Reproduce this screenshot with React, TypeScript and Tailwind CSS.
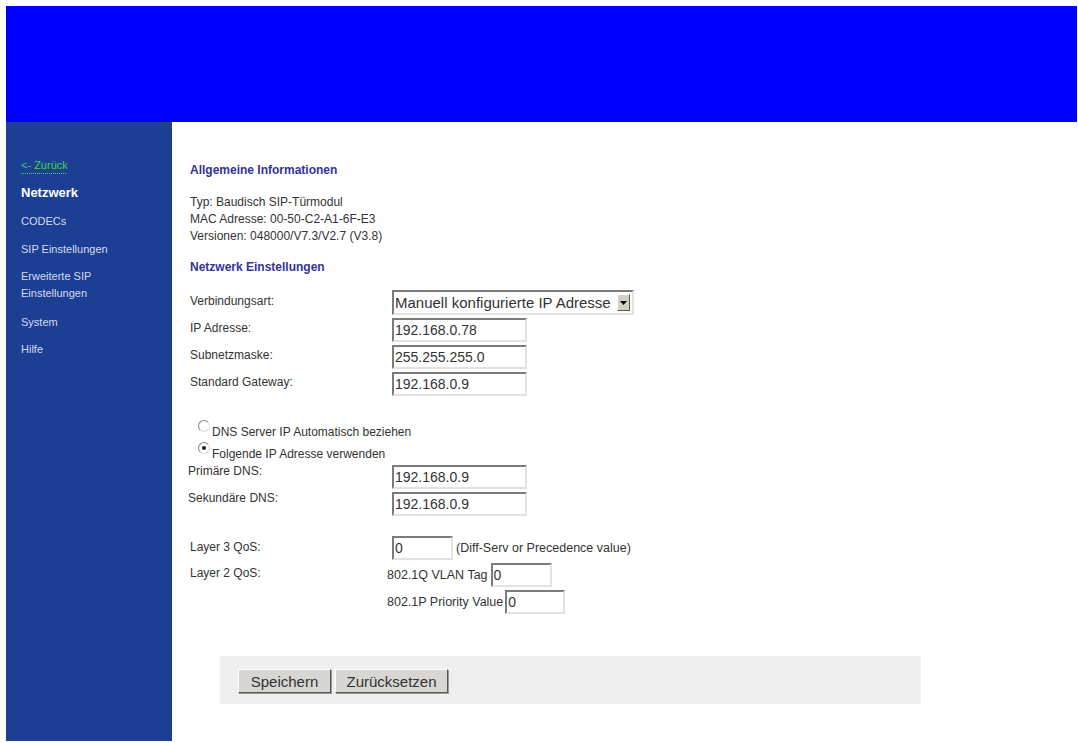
import React from 'react'

const inset =
  'border-2 border-t-[#7b7b7b] border-l-[#7b7b7b] border-r-[#e2e2e2] border-b-[#e2e2e2] bg-white'

function TextBox({ value, className }: { value: string; className: string }) {
  return (
    <input
      readOnly
      value={value}
      className={`${inset} h-[24px] px-[1px] text-[14px] leading-none text-[#333] outline-none ${className}`}
    />
  )
}

function Radio({ checked }: { checked?: boolean }) {
  return (
    <span className="flex h-[12px] w-[12px] shrink-0 items-center justify-center rounded-full border border-t-[#808080] border-l-[#808080] border-r-[#dcdcdc] border-b-[#dcdcdc] bg-white">
      {checked && <span className="h-[4px] w-[4px] rounded-full bg-[#222]" />}
    </span>
  )
}

function Button({ label, className }: { label: string; className: string }) {
  return (
    <button
      type="button"
      className={`h-[24px] border border-t-white border-l-white border-r-[#555] border-b-[#555] bg-[#d8d6d2] text-[15px] leading-none text-[#333] shadow-[1px_1px_0_#9a9a9a] ${className}`}
    >
      {label}
    </button>
  )
}

const nav = [
  { label: 'CODECs' },
  { label: 'SIP Einstellungen' },
]

export default function App() {
  return (
    <div className="min-h-screen bg-white pl-[6px] pr-[1px] pt-[6px] font-['Liberation_Sans',Arial,sans-serif]">
      {/* header band */}
      <div className="h-[116px] bg-[#0000ff]" />

      <div className="flex h-[619px]">
        {/* sidebar */}
        <nav className="w-[166px] shrink-0 bg-[#1c3f94] pl-[15px] pt-[29px] text-[11px] text-[#d3dbf0]">
          <div className="flex h-[28px] items-center">
            <span className="text-[#49cf4a] underline decoration-dotted decoration-[#49cf4a] underline-offset-[4px]">
              &lt;- Zurück
            </span>
          </div>
          <div className="flex h-[28px] items-center text-[13px] font-bold text-white">Netzwerk</div>
          {nav.map(n => (
            <div key={n.label} className="flex h-[28px] items-center">
              {n.label}
            </div>
          ))}
          <div className="h-[45px] pt-[5px] leading-[17px]">
            Erweiterte SIP
            <br />
            Einstellungen
          </div>
          <div className="flex h-[28px] items-center">System</div>
          <div className="flex h-[26px] items-center">Hilfe</div>
        </nav>

        {/* content */}
        <main className="flex-1 pl-[18px] pt-[40px] text-[12px] text-[#333]">
          <h2 className="text-[12px] font-bold leading-[16px] text-[#333399]">Allgemeine Informationen</h2>
          <div className="mt-[16px] leading-[17px]">
            <p>Typ: Baudisch SIP-Türmodul</p>
            <p>MAC Adresse: 00-50-C2-A1-6F-E3</p>
            <p>Versionen: 048000/V7.3/V2.7 (V3.8)</p>
          </div>
          <h2 className="mt-[14px] text-[12px] font-bold leading-[16px] text-[#333399]">Netzwerk Einstellungen</h2>

          <div className="mt-[14px]">
            <div className="flex h-[27px] items-center">
              <span className="w-[202px] pb-[3px]">Verbindungsart:</span>
              <div className={`${inset} flex h-[25px] w-[242px] items-center justify-between pl-[1px] pr-[2px]`}>
                <span className="text-[15px] leading-none text-[#333]">Manuell konfigurierte IP Adresse</span>
                <span className="flex h-[17px] w-[13px] items-center justify-center border border-t-white border-l-white border-r-[#555] border-b-[#555] bg-[#d4d0c8]">
                  <svg width="7" height="4" viewBox="0 0 7 4">
                    <path d="M0 0h7L3.5 4z" fill="#000" />
                  </svg>
                </span>
              </div>
            </div>
            {[
              ['IP Adresse:', '192.168.0.78'],
              ['Subnetzmaske:', '255.255.255.0'],
              ['Standard Gateway:', '192.168.0.9'],
            ].map(([label, value]) => (
              <div key={label} className="flex h-[27px] items-center">
                <span className="w-[202px] pb-[4px]">{label}</span>
                <TextBox value={value} className="w-[135px]" />
              </div>
            ))}
          </div>

          {/* DNS mode */}
          <div className="mt-[21px] pl-[8px]">
            <div className="flex h-[22px] items-start gap-[2px]">
              <span className="mt-[2px]">
                <Radio />
              </span>
              <span className="mt-[7px] leading-[14px]">DNS Server IP Automatisch beziehen</span>
            </div>
            <div className="flex h-[22px] items-start gap-[2px]">
              <span className="mt-[2px]">
                <Radio checked />
              </span>
              <span className="mt-[7px] leading-[14px]">Folgende IP Adresse verwenden</span>
            </div>
          </div>

          <div className="-ml-[2px] mt-[2px]">
            {[
              ['Primäre DNS:', '192.168.0.9'],
              ['Sekundäre DNS:', '192.168.0.9'],
            ].map(([label, value]) => (
              <div key={label} className="flex h-[27px] items-start">
                <span className="w-[204px] leading-[14px]">{label}</span>
                <TextBox value={value} className="mt-[1px] w-[135px]" />
              </div>
            ))}
          </div>

          {/* QoS */}
          <div className="mt-[18px] flex h-[24px] items-center">
            <span className="w-[202px] pb-[3px]">Layer 3 QoS:</span>
            <TextBox value="0" className="w-[61px]" />
            <span className="ml-[3px] text-[12.5px]">(Diff-Serv or Precedence value)</span>
          </div>
          <div className="mt-[3px] flex">
            <span className="w-[197px] pt-[3px] leading-[14px]">Layer 2 QoS:</span>
            <div className="text-[12.5px]">
              <div className="flex h-[24px] items-center gap-[3px]">
                <span>802.1Q VLAN Tag</span>
                <TextBox value="0" className="w-[61px]" />
              </div>
              <div className="mt-[3px] flex h-[24px] items-center gap-[2px]">
                <span>802.1P Priority Value</span>
                <TextBox value="0" className="w-[60px]" />
              </div>
            </div>
          </div>

          {/* actions */}
          <div className="ml-[30px] mt-[42px] flex h-[48px] w-[701px] gap-[4px] bg-[#efefef] pl-[18px] pt-[13px]">
            <Button label="Speichern" className="w-[93px]" />
            <Button label="Zurücksetzen" className="w-[113px]" />
          </div>
        </main>
      </div>
    </div>
  )
}
